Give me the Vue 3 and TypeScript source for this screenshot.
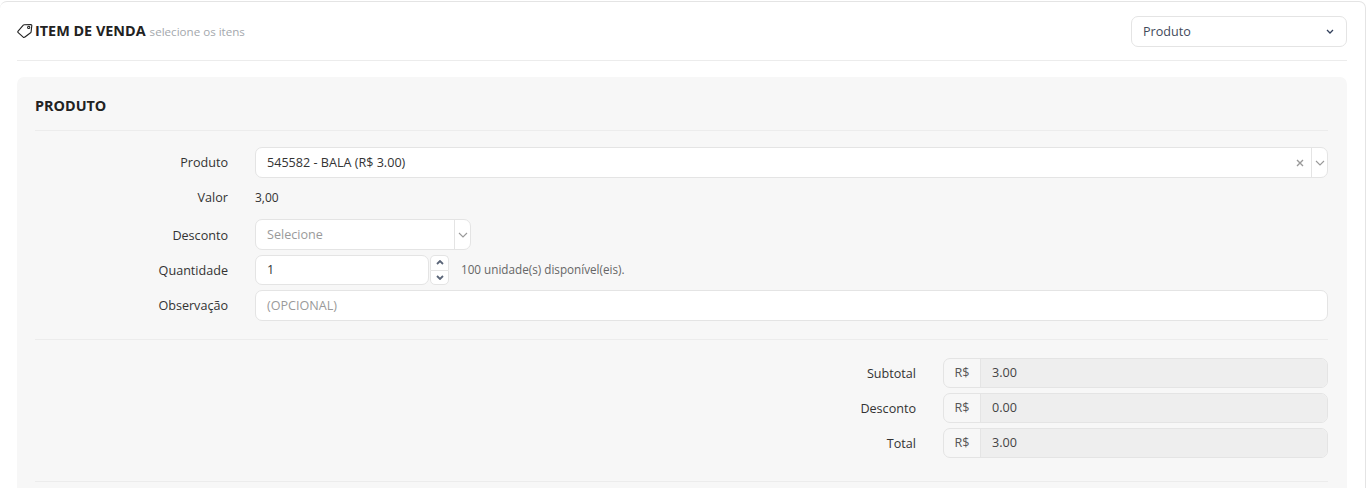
<template>
  <div class="page">
    <div class="card">
      <div class="card-header">
        <div class="card-title">
          <svg class="tag-icon" width="16" height="16" viewBox="0 0 16 16" fill="none" stroke="#222" stroke-width="1.1">
            <path d="M1.1 8.2 6.3 2.1a1.2 1.2 0 0 1 .9-.4L13.9 1.6a.9.9 0 0 1 .9 1l-.7 6.4a1.2 1.2 0 0 1-.5.8L7.6 14.2a1 1 0 0 1-1.4-.1L1.2 9.6a1 1 0 0 1-.1-1.4Z" />
            <circle cx="11.7" cy="4.4" r="1.1" />
          </svg>
          <strong>ITEM DE VENDA</strong>
          <small>selecione os itens</small>
        </div>
        <div class="type-select">
          <span>Produto</span>
          <svg width="8" height="5" viewBox="0 0 8 5" fill="none" stroke="#33415c" stroke-width="1.3"><path d="M1 1l3 3 3-3" /></svg>
        </div>
      </div>

      <section class="panel">
        <h4>PRODUTO</h4>

        <div class="form">
          <div class="row">
            <label>Produto</label>
            <div class="combo full">
              <span class="combo-value">{{ product }}</span>
              <svg class="clear" width="8" height="8" viewBox="0 0 8 8" fill="none" stroke="#999" stroke-width="1.4"><path d="M1 1l6 6M7 1 1 7" /></svg>
              <span class="combo-arrow"><svg width="10" height="6" viewBox="0 0 10 6" fill="none" stroke="#999" stroke-width="1.1"><path d="M1 1l4 4 4-4" /></svg></span>
            </div>
          </div>
          <div class="row">
            <label class="raised">Valor</label>
            <span class="static">3,00</span>
          </div>
          <div class="row">
            <label class="lowered">Desconto</label>
            <div class="combo short">
              <span class="combo-value muted">Selecione</span>
              <span class="combo-arrow"><svg width="10" height="6" viewBox="0 0 10 6" fill="none" stroke="#999" stroke-width="1.1"><path d="M1 1l4 4 4-4" /></svg></span>
            </div>
          </div>
          <div class="row row-qty">
            <label>Quantidade</label>
            <div class="spinner">
              <div class="input qty">1</div>
              <div class="spin-btns">
                <button type="button"><svg width="8" height="5" viewBox="0 0 8 5" fill="none" stroke="#5a6578" stroke-width="1.8"><path d="M1 4l3-3 3 3" /></svg></button>
                <button type="button"><svg width="8" height="5" viewBox="0 0 8 5" fill="none" stroke="#5a6578" stroke-width="1.8"><path d="M1 1l3 3 3-3" /></svg></button>
              </div>
            </div>
            <span class="hint">100 unidade(s) disponível(eis).</span>
          </div>
          <div class="row">
            <label>Observação</label>
            <div class="input full muted">(OPCIONAL)</div>
          </div>
        </div>

        <div class="totals">
          <div v-for="line in totals" :key="line.label" class="total-row">
            <label>{{ line.label }}</label>
            <div class="money">
              <span class="addon">R$</span>
              <span class="amount">{{ line.value }}</span>
            </div>
          </div>
        </div>

        <div class="panel-end"></div>
      </section>
    </div>
  </div>
</template>

<script setup lang="ts">
type TotalLine = {
  label: string;
  value: string;
};

const product = "545582 - BALA (R$ 3.00)";

const totals: TotalLine[] = [
  { label: "Subtotal", value: "3.00" },
  { label: "Desconto", value: "0.00" },
  { label: "Total", value: "3.00" },
];
</script>

<style>
html,
body {
  margin: 0;
  background: #fff;
  overflow: hidden;
}
</style>

<style scoped>
.page {
  height: 488px;
  overflow: hidden;
  padding-top: 1px;
  box-sizing: border-box;
  font-family: "Open Sans", sans-serif;
  font-size: 12.6px;
  color: #333;
}

.card {
  width: 1366px;
  box-sizing: border-box;
  border: 1px solid #e4e4e4;
  border-left: 0;
  border-radius: 7px;
  padding: 14px 18px 0 17px;
  background: #fff;
}

.card-header {
  display: flex;
  align-items: center;
  justify-content: space-between;
  height: 30px;
  padding-bottom: 14px;
  border-bottom: 1px solid #ececec;
}

.card-title {
  display: flex;
  align-items: baseline;
  position: relative;
  top: -1px;
  padding-left: 18px;
}

.tag-icon {
  position: absolute;
  left: 0;
  top: 2px;
}

.card-title strong {
  font-size: 14.4px;
  font-weight: 700;
  color: #222;
}

.card-title small {
  margin-left: 4px;
  font-size: 11.6px;
  color: #a3a8ad;
}

.type-select {
  width: 216px;
  height: 31px;
  box-sizing: border-box;
  display: flex;
  align-items: center;
  justify-content: space-between;
  padding: 0 12px 0 11px;
  border: 1px solid #e4e4e4;
  border-radius: 7px;
  color: #3f4a5a;
}

.panel {
  margin-top: 16px;
  padding: 0 19px 0 18px;
  background: #f7f7f7;
  border-radius: 7px 7px 0 0;
}

.panel h4 {
  margin: 0;
  height: 53px;
  line-height: 57px;
  font-size: 14.4px;
  font-weight: 700;
  color: #222;
  border-bottom: 1px solid #ececec;
}

.form {
  display: flex;
  flex-direction: column;
  gap: 5px;
  padding: 16px 0 18px;
  border-bottom: 1px solid #ececec;
}

.row {
  display: flex;
  align-items: center;
  min-height: 31px;
}

.row-qty {
  min-height: 30px;
}

.row label {
  width: 193px;
  flex: none;
  text-align: right;
  margin-right: 27px;
  color: #333;
}

.row label.raised {
  position: relative;
  top: -1px;
}

.row label.lowered {
  position: relative;
  top: 1px;
}

.full {
  flex: 1;
}

.combo {
  height: 31px;
  box-sizing: border-box;
  display: flex;
  align-items: center;
  border: 1px solid #e4e4e4;
  border-radius: 7px;
  background: #fff;
}

.combo.short {
  width: 216px;
}

.combo-value {
  flex: 1;
  padding-left: 11px;
  color: #333;
}

.muted,
.combo-value.muted {
  color: #9a9a9a;
}

.clear {
  margin-right: 7px;
}

.combo-arrow {
  width: 15px;
  height: 100%;
  display: flex;
  align-items: center;
  justify-content: center;
  border-left: 1px solid #e4e4e4;
}

.static {
  font-size: 12px;
  line-height: 29px;
  padding-bottom: 2px;
}

.spinner {
  display: flex;
  width: 194px;
  height: 30px;
}

.input {
  height: 31px;
  box-sizing: border-box;
  display: flex;
  align-items: center;
  padding-left: 11px;
  border: 1px solid #e4e4e4;
  border-radius: 7px;
  background: #fff;
}

.qty {
  width: 174px;
  height: 30px;
  padding-bottom: 2px;
  color: #333;
}

.spin-btns {
  width: 19px;
  margin-left: 1px;
  display: flex;
  flex-direction: column;
}

.spin-btns button {
  flex: 1;
  padding: 0;
  display: flex;
  align-items: center;
  justify-content: center;
  background: #fff;
  border: 1px solid #e4e4e4;
}

.spin-btns button:first-child {
  border-radius: 5px 5px 0 0;
  border-bottom: 0;
}

.spin-btns button:last-child {
  border-radius: 0 0 5px 5px;
}

.hint {
  margin-left: 12px;
  padding-bottom: 2px;
  font-size: 11.7px;
  color: #666;
}

.totals {
  display: flex;
  flex-direction: column;
  gap: 5px;
  padding: 18px 0 23px;
  border-bottom: 1px solid #ececec;
}

.total-row {
  display: flex;
  align-items: center;
  justify-content: flex-end;
}

.total-row label {
  margin-right: 27px;
}

.money {
  width: 385px;
  height: 30px;
  box-sizing: border-box;
  display: flex;
  border: 1px solid #e4e4e4;
  border-radius: 7px;
  overflow: hidden;
}

.addon {
  width: 37px;
  flex: none;
  display: flex;
  align-items: center;
  justify-content: center;
  padding-bottom: 2px;
  box-sizing: border-box;
  border-right: 1px solid #e4e4e4;
  color: #555;
}

.amount {
  flex: 1;
  display: flex;
  align-items: center;
  padding: 0 0 2px 11px;
  background: #eeeeee;
  color: #444;
}

.panel-end {
  height: 20px;
}
</style>
